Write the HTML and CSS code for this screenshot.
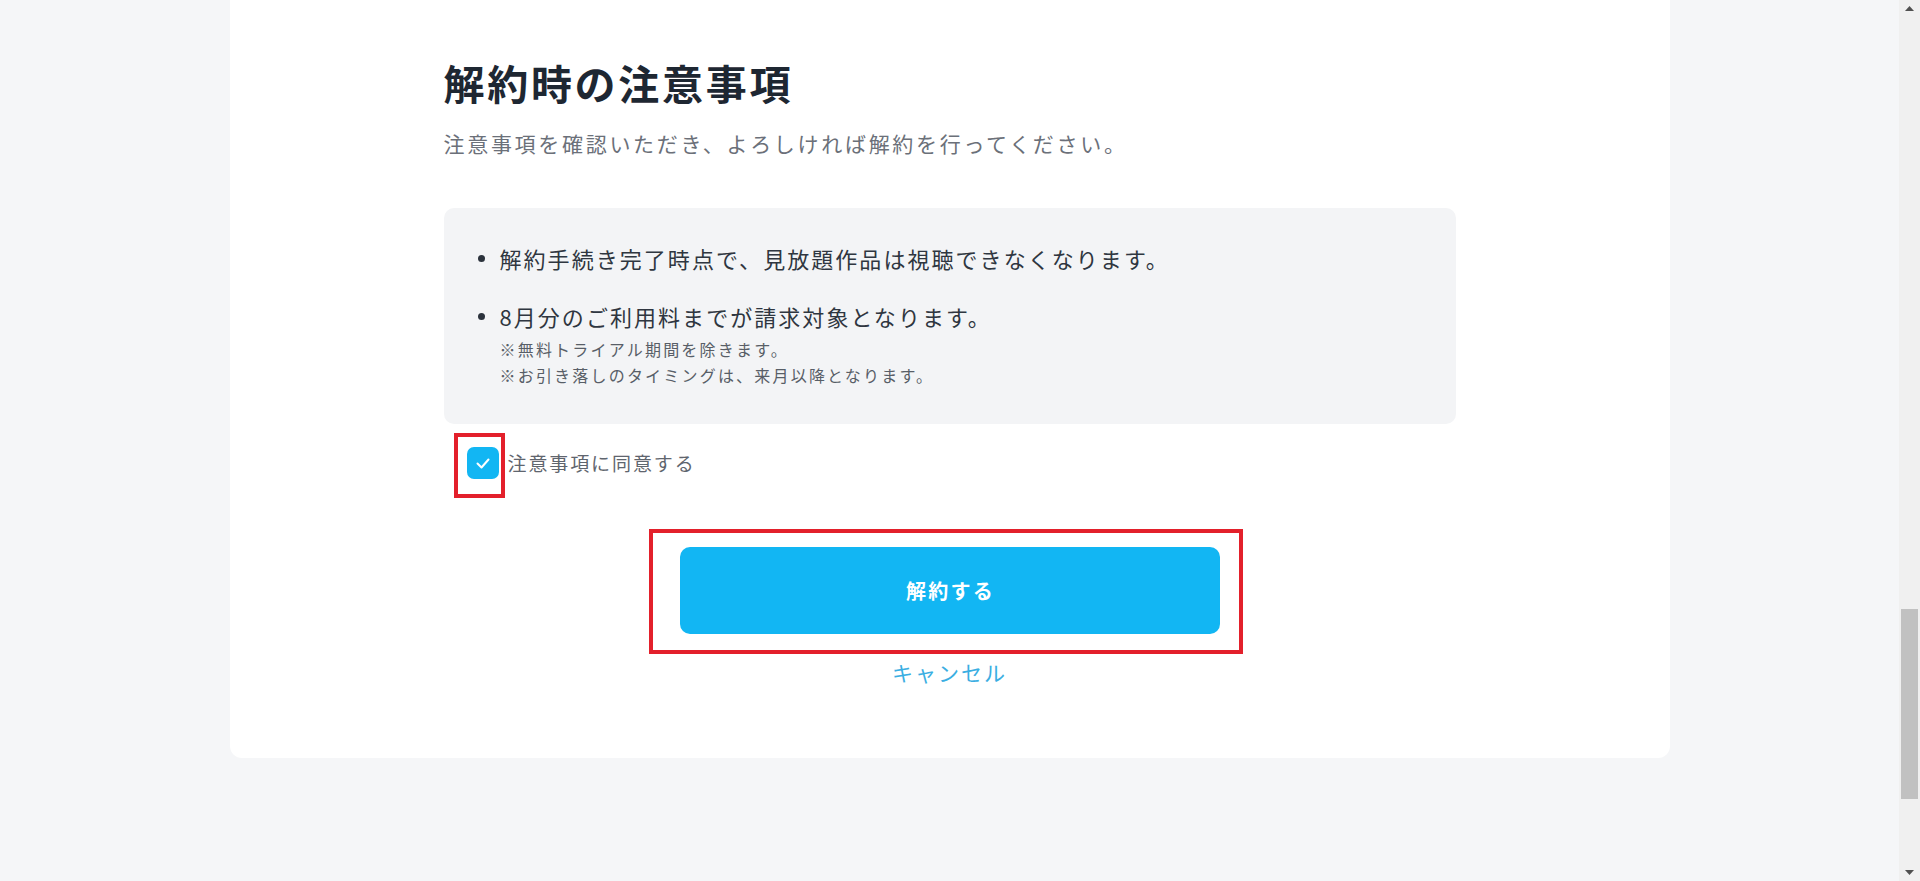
FILE: index.html
```html
<!DOCTYPE html>
<html lang="ja">
<head>
<meta charset="utf-8">
<title>解約時の注意事項</title>
<link rel="stylesheet" href="styles.css">
</head>
<body>
<div class="viewport">
  <main class="page">
    <section class="card">
      <div class="content">
        <h1 class="title">解約時の注意事項</h1>
        <p class="lead">注意事項を確認いただき、よろしければ解約を行ってください。</p>
        <div class="notice">
          <ul class="notice-list">
            <li class="notice-item">
              <span class="dot"></span>
              <div class="item-body">
                <p class="item-text">解約手続き完了時点で、見放題作品は視聴できなくなります。</p>
              </div>
            </li>
            <li class="notice-item notice-item--second">
              <span class="dot"></span>
              <div class="item-body">
                <p class="item-text">8月分のご利用料までが請求対象となります。</p>
                <p class="note note--first">※無料トライアル期間を除きます。</p>
                <p class="note">※お引き落しのタイミングは、来月以降となります。</p>
              </div>
            </li>
          </ul>
        </div>
        <label class="agree">
          <span class="checkbox-wrap">
            <span class="checkbox">
              <svg class="check-icon" viewBox="0 0 32 32" width="32" height="32" aria-hidden="true">
                <polyline points="10.5,16.5 14.5,20.5 21.5,12.5" fill="none" stroke="#ffffff" stroke-width="2" stroke-linecap="round" stroke-linejoin="round"/>
              </svg>
            </span>
            <span class="annot annot--check"></span>
          </span>
          <span class="agree-text">注意事項に同意する</span>
        </label>
        <div class="actions">
          <div class="btn-wrap">
            <button class="btn-primary" type="button">解約する</button>
            <span class="annot annot--btn"></span>
          </div>
          <a class="cancel">キャンセル</a>
        </div>
      </div>
    </section>
  </main>
  <div class="scrollbar">
    <div class="sb-arrow">
      <svg viewBox="0 0 9 5" width="9" height="5" aria-hidden="true"><polygon points="0,5 4.5,0 9,5" fill="#505050"/></svg>
    </div>
    <div class="sb-track">
      <div class="sb-thumb"></div>
    </div>
    <div class="sb-arrow">
      <svg viewBox="0 0 9 5" width="9" height="5" aria-hidden="true"><polygon points="0,0 9,0 4.5,5" fill="#505050"/></svg>
    </div>
  </div>
</div>
</body>
</html>
```

FILE: styles.css
```css
* {
  box-sizing: border-box;
}

html, body {
  margin: 0;
  padding: 0;
}

body {
  font-family: "Noto Sans CJK JP", "Noto Sans", sans-serif;
  background: #f5f6f8;
  overflow: hidden;
}

.viewport {
  display: flex;
  width: 1920px;
  height: 881px;
  overflow: hidden;
}

.page {
  flex: 1;
  display: flex;
  flex-direction: column;
  align-items: center;
  background: #f5f6f8;
}

.card {
  width: 1440px;
  background: #ffffff;
  border-radius: 0 0 12px 12px;
  padding-bottom: 71px;
  display: flex;
  justify-content: center;
}

.content {
  width: 1012px;
  display: flex;
  flex-direction: column;
}

.title {
  margin: 57px 0 0;
  font-size: 41px;
  line-height: 50px;
  font-weight: 700;
  letter-spacing: 2.7px;
  color: #1e2732;
}

.lead {
  margin: 20px 0 0;
  font-size: 21px;
  line-height: 32px;
  letter-spacing: 2.7px;
  color: #6b7079;
}

.notice {
  margin-top: 49px;
  background: #f3f4f6;
  border-radius: 10px;
  padding: 33px 34px 36px;
}

.notice-list {
  list-style: none;
  margin: 0;
  padding: 0;
}

.notice-item {
  display: flex;
  align-items: flex-start;
  gap: 15px;
}

.notice-item--second {
  margin-top: 24px;
}

.dot {
  width: 7px;
  height: 7px;
  border-radius: 50%;
  background: #2b323c;
  margin-top: 14px;
  flex: none;
}

.item-text {
  margin: 0;
  font-size: 22px;
  line-height: 34px;
  letter-spacing: 2.05px;
  color: #2f3640;
}

.note {
  margin: 0;
  font-size: 16px;
  line-height: 26px;
  letter-spacing: 2.2px;
  color: #585e67;
}

.note--first {
  margin-top: 3px;
}

.agree {
  margin-top: 23px;
  display: flex;
  align-items: center;
  gap: 9px;
  padding-left: 23px;
}

.checkbox-wrap {
  position: relative;
  width: 32px;
  height: 32px;
  flex: none;
}

.checkbox {
  display: flex;
  width: 32px;
  height: 32px;
  border-radius: 7px;
  background: #12b6f3;
}

.check-icon {
  display: block;
}

.agree-text {
  font-size: 19px;
  line-height: 30px;
  letter-spacing: 1.9px;
  color: #5f656e;
}

.annot {
  position: absolute;
  border: 4px solid #e3202b;
  pointer-events: none;
}

.annot--check {
  left: -13px;
  top: -14px;
  width: 51px;
  height: 65px;
}

.actions {
  display: flex;
  flex-direction: column;
  align-items: center;
  margin-top: 68px;
}

.btn-wrap {
  position: relative;
  width: 540px;
  height: 87px;
}

.btn-primary {
  display: flex;
  align-items: center;
  justify-content: center;
  width: 540px;
  height: 87px;
  border: none;
  border-radius: 10px;
  background: #12b6f3;
  color: #ffffff;
  font-family: "Noto Sans CJK JP", "Noto Sans", sans-serif;
  font-size: 20px;
  font-weight: 700;
  letter-spacing: 2.3px;
  padding: 0 0 0 2px;
}

.annot--btn {
  left: -31px;
  top: -18px;
  width: 594px;
  height: 125px;
}

.cancel {
  margin-top: 23px;
  font-size: 21px;
  line-height: 30px;
  letter-spacing: 2px;
  color: #3aaee2;
}

.scrollbar {
  width: 21px;
  height: 881px;
  background: #f0f0f0;
  display: flex;
  flex-direction: column;
  flex: none;
}

.sb-arrow {
  height: 17px;
  display: flex;
  align-items: center;
  justify-content: center;
  flex: none;
}

.sb-track {
  flex: 1;
  padding: 592px 2px 0;
}

.sb-thumb {
  height: 190px;
  background: #c1c1c1;
}
```
